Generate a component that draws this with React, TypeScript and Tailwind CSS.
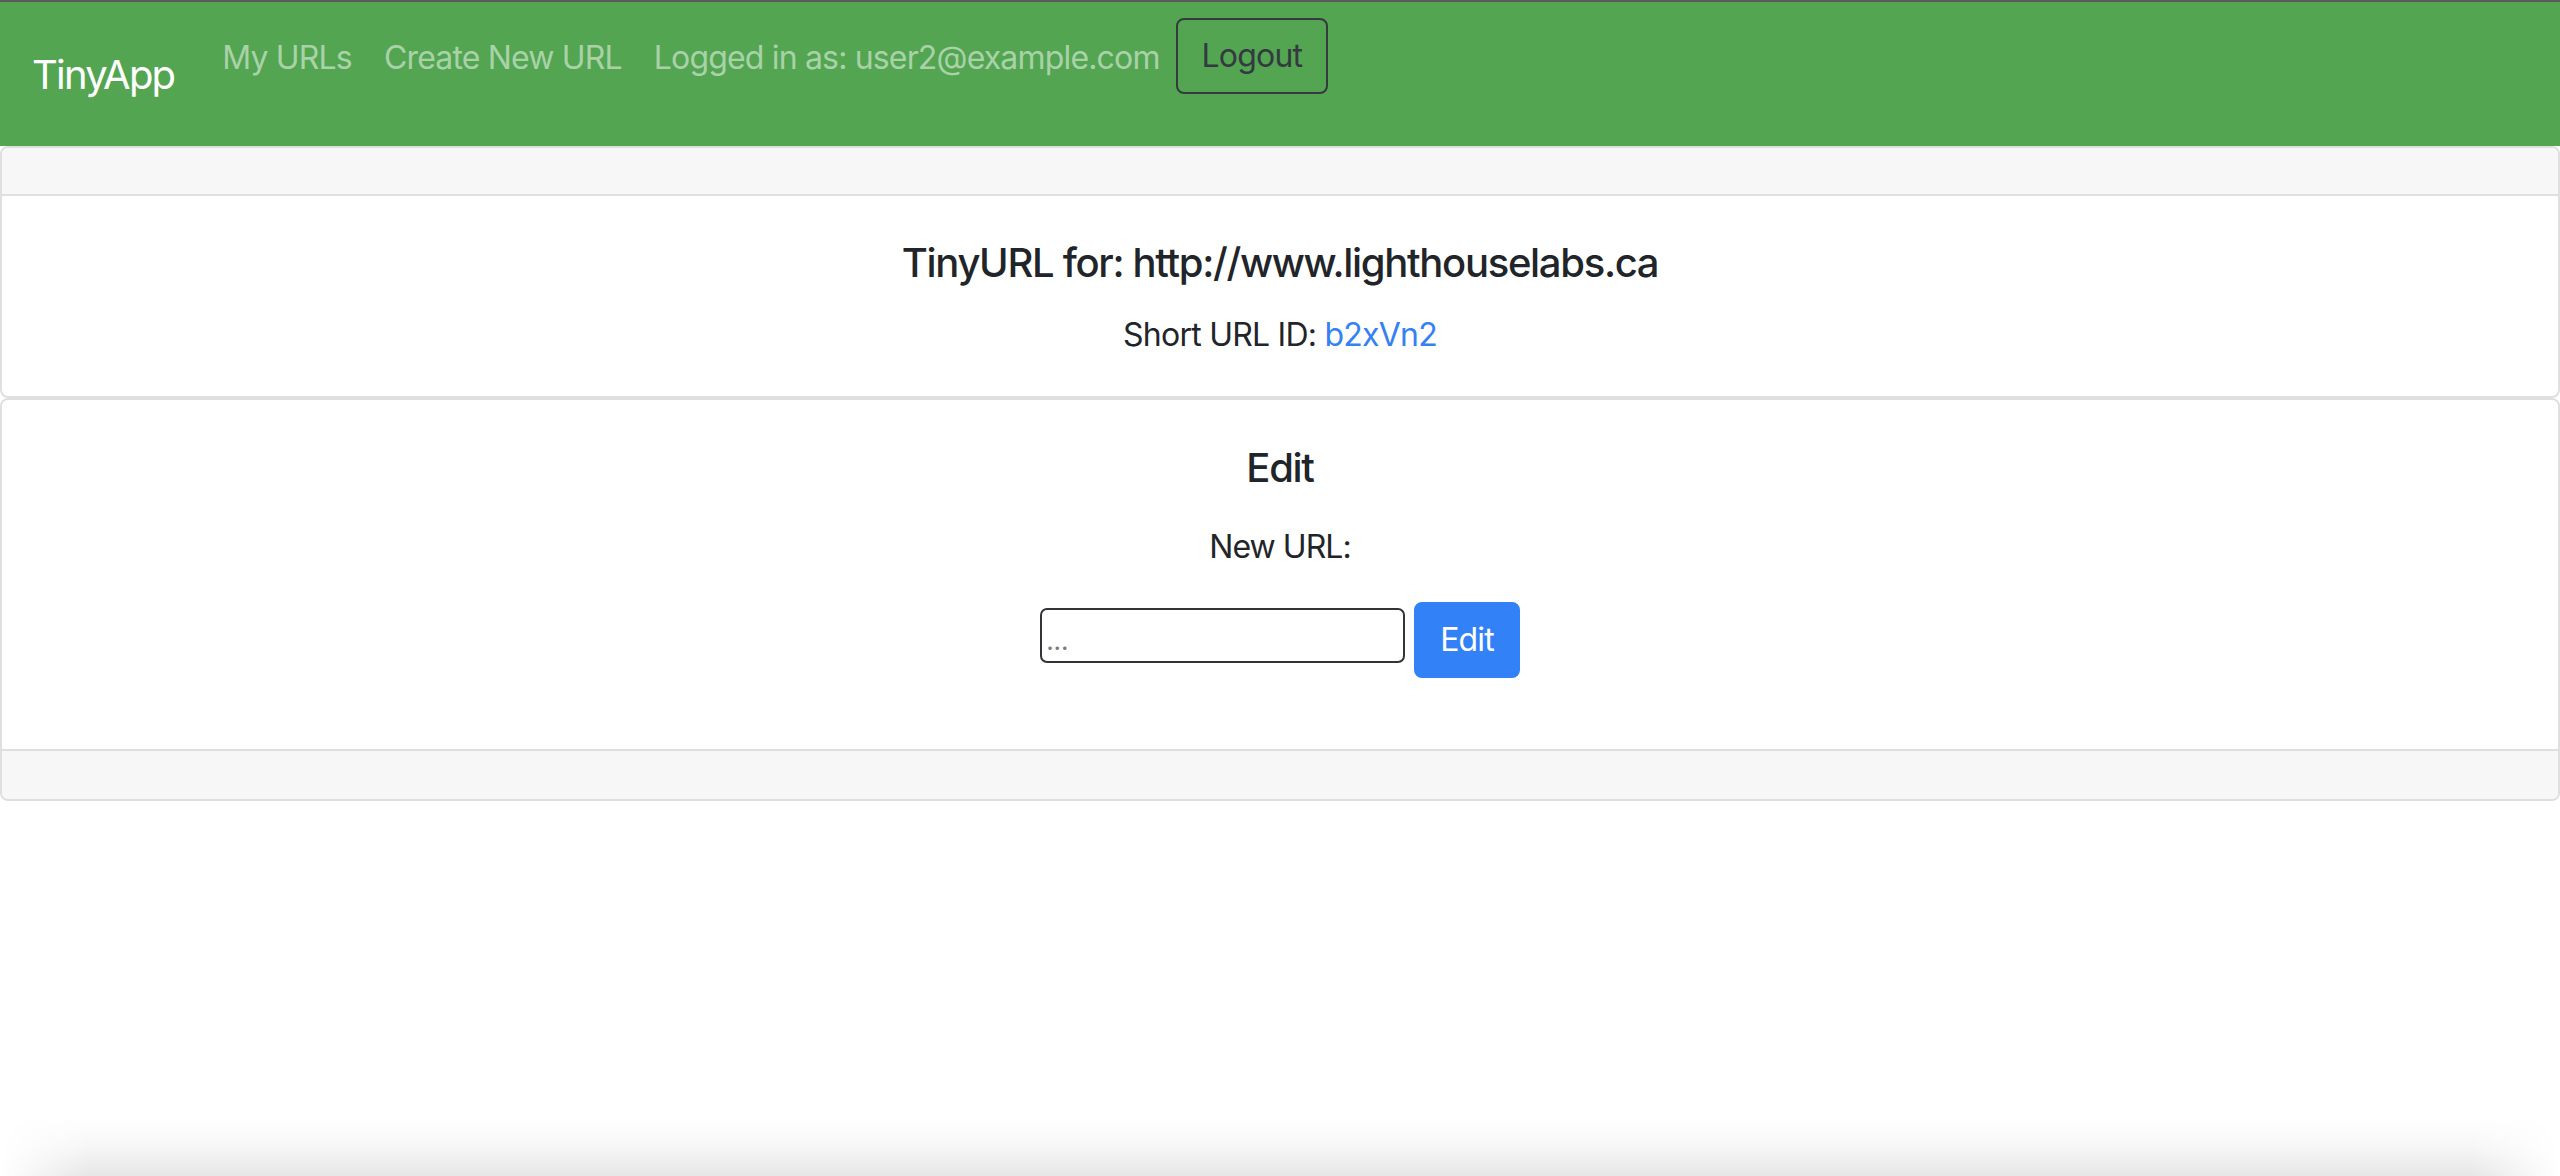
import React from "react";

export default function App() {
  return (
    <div className="flex h-[1176px] w-full flex-col overflow-hidden bg-white font-['Inter','Noto_Sans',sans-serif] text-[#212529]">
      {/* Navbar */}
      <nav className="flex h-[146px] shrink-0 items-start border-t-2 border-[#5b5b5b] bg-[#53a552] px-[32px] pt-[16px]">
        <a className="mr-[32px] -mt-[14px] self-center text-[40px] leading-[60px] tracking-[-0.045em] text-white">
          TinyApp
        </a>
        <ul className="flex items-start">
          <li>
            <a className="block px-[16px] py-[16px] text-[32px] leading-[48px] tracking-[-0.026em] text-[#a9d2a8]">
              My URLs
            </a>
          </li>
          <li>
            <a className="block px-[16px] py-[16px] text-[32px] leading-[48px] tracking-[-0.026em] text-[#a9d2a8]">
              Create New URL
            </a>
          </li>
          <li>
            <span className="block px-[16px] py-[16px] text-[32px] leading-[48px] tracking-[-0.026em] text-[#a9d2a8]">
              Logged in as: user2@example.com
            </span>
          </li>
          <li>
            <button className="rounded-[8px] border-2 border-[#343a40] px-[24px] py-[12px] text-[32px] leading-[48px] tracking-[-0.026em] text-[#343a40]">
              Logout
            </button>
          </li>
        </ul>
      </nav>

      {/* Card 1 */}
      <div className="shrink-0 overflow-hidden rounded-[8px] border-2 border-[#dfdfdf]">
        <div className="h-[48px] border-b-2 border-[#dfdfdf] bg-[#f7f7f7]" />
        <div className="flex h-[200px] flex-col items-center pt-[43px]">
          <h5 className="mb-[24px] text-[40px] font-medium leading-[48px] tracking-[-0.033em]">
            TinyURL for: http://www.lighthouselabs.ca
          </h5>
          <p className="text-[32px] leading-[48px] tracking-[-0.024em]">
            Short URL ID: <a className="text-[#3381f3]">b2xVn2</a>
          </p>
        </div>
      </div>

      {/* Card 2 */}
      <div className="shrink-0 overflow-hidden rounded-[8px] border-2 border-[#dfdfdf]">
        <div className="flex flex-col items-center pb-[40px] pt-[44px]">
          <h5 className="mb-[31px] text-[40px] font-medium leading-[48px] tracking-[-0.033em]">Edit</h5>
          <p className="mb-[31px] text-[32px] leading-[48px] tracking-[-0.03em]">New URL:</p>
          <form className="mb-[31px] flex items-start gap-[9px]">
            <input
              type="text"
              placeholder="..."
              className="mt-[6px] h-[55px] w-[365px] rounded-[7px] border-2 border-[#333438] px-[4px] pt-[10px] text-[26px] leading-[30px] placeholder:text-[#7a7a7a]"
            />
            <button
              type="button"
              className="h-[76px] rounded-[8px] border-2 border-[#3381f6] bg-[#3381f6] px-[24px] text-[32px] leading-[48px] tracking-[-0.026em] text-white"
            >
              Edit
            </button>
          </form>
        </div>
        <div className="h-[50px] border-t-2 border-[#dfdfdf] bg-[#f7f7f7]" />
      </div>

      <div className="flex-1" />

      {/* window bottom shade */}
      <div className="h-[60px] shrink-0 bg-gradient-to-b from-white via-[#f7f7f7] to-[#e6e6e6] [mask-image:linear-gradient(to_right,transparent,black_90px,black_calc(100%-90px),transparent)]" />
    </div>
  );
}
